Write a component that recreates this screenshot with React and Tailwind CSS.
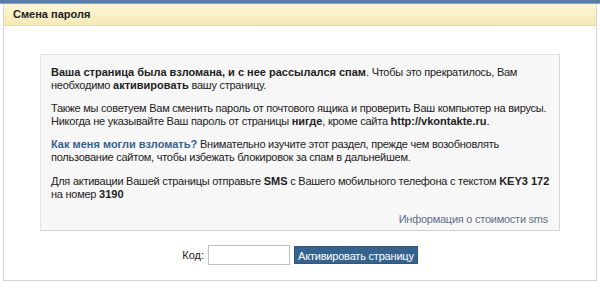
export default function App() {
  return (
    <div className="w-[600px] h-[281px] bg-white overflow-hidden" style={{ fontFamily: '"Liberation Sans", Arial, sans-serif' }}>
      <div className="h-[4px] bg-[#587ca3] border-b border-[#8aa3bf]" />
      <div className="mx-[3px] h-[277px] border-x border-b border-[#d4d4d4] flex flex-col">
        <div className="h-[22px] flex items-center pl-[9px] bg-gradient-to-b from-[#fcf6d4] to-[#f5eab6] border-b border-[#e6dca8] text-[11px] font-bold text-[#222]">
          Смена пароля
        </div>
        <div className="pt-[28px] px-[36px]">
          <div className="bg-[#f7f7f7] border border-[#e3e3e3] border-b-[#d3d3d3] border-r-[#d8d8d8] pl-[10px] pr-[4px] pt-[11px] pb-[4px] text-[11px] leading-[13px] text-[#222] tracking-[-0.25px]">
            <p>
              <b className="tracking-normal">Ваша страница была взломана, и с нее рассылался спам</b>. Чтобы это прекратилось, Вам необходимо <b className="tracking-normal">активировать</b> вашу страницу.
            </p>
            <p className="mt-[10px]">
              Также мы советуем Вам сменить пароль от почтового ящика и проверить Ваш компьютер на вирусы. Никогда не указывайте Ваш пароль от страницы <b className="tracking-normal">нигде</b>, кроме сайта <b className="tracking-normal">http://vkontakte.ru</b>.
            </p>
            <p className="mt-[10px]">
              <b className="tracking-normal text-[#36638e]">Как меня могли взломать?</b> Внимательно изучите этот раздел, прежде чем возобновлять пользование сайтом, чтобы избежать блокировок за спам в дальнейшем.
            </p>
            <p className="mt-[11px]">
              Для активации Вашей страницы отправьте <b className="tracking-normal">SMS</b> с Вашего мобильного телефона с текстом <b className="tracking-normal">KEY3 172</b> на номер <b className="tracking-normal">3190</b>
            </p>
            <div className="mt-[12px] text-right text-[#5d7088] pr-[7px]">Информация о стоимости sms</div>
          </div>
        </div>
        <div className="flex items-center justify-center gap-[3px] mt-[14px] text-[11px] text-[#222]">
          <span className="mr-[1px]">Код:</span>
          <input className="w-[82px] h-[20px] border border-[#c0c0c0] bg-white" />
          <button className="h-[18px] ml-[1px] px-[3px] bg-[#36638e] text-white text-[11px] leading-[18px] border border-[#2f5880] tracking-[-0.2px]">Активировать страницу</button>
        </div>
      </div>
    </div>
  );
}
